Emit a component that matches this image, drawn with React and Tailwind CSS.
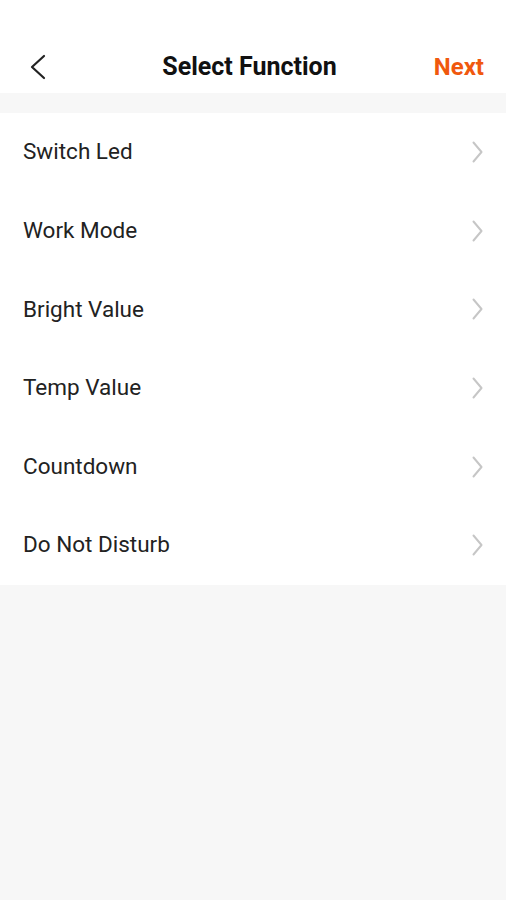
import React from "react";

const functions = ["Switch Led", "Work Mode", "Bright Value", "Temp Value", "Countdown", "Do Not Disturb"];

export default function App() {
  return (
    <div className="min-h-[900px] w-full bg-[#f7f7f7] font-['Roboto',sans-serif]">
      <div className="flex h-[93px] items-center justify-between bg-white pt-[40px] pl-[30px] pr-[22px]">
        <button className="flex w-[60px] items-center text-[#222]">
          <svg width="16" height="26" viewBox="0 0 16 26" fill="none" stroke="currentColor" strokeWidth="2.2" strokeLinecap="round" strokeLinejoin="round">
            <path d="M14 2L2 13l12 11" />
          </svg>
        </button>
        <h1 className="mr-[15px] text-[25px] font-bold text-[#111]">Select Function</h1>
        <span className="w-[60px] text-right text-[24px] font-bold text-[#f0580e]">Next</span>
      </div>
      <div className="h-[20px]" />
      <ul className="bg-white">
        {functions.map((name) => (
          <li key={name} className="flex h-[78.6px] items-center justify-between pl-[23px] pr-[23px]">
            <span className="text-[22.5px] text-[#222]">{name}</span>
            <svg width="11" height="22" viewBox="0 0 11 22" fill="none" stroke="#c6c6c6" strokeWidth="2" strokeLinecap="round" strokeLinejoin="round">
              <path d="M1.5 1.5L9.5 11l-8 9.5" />
            </svg>
          </li>
        ))}
      </ul>
    </div>
  );
}
